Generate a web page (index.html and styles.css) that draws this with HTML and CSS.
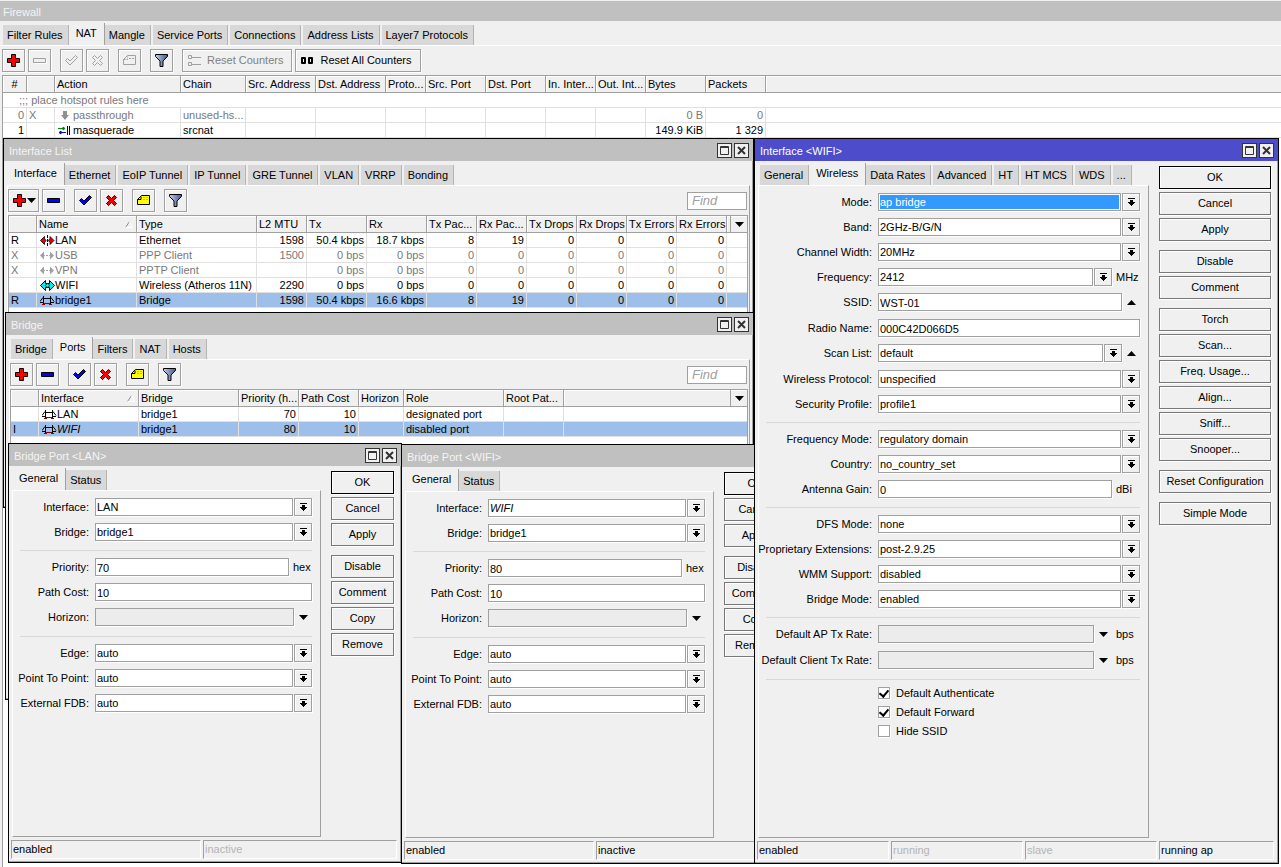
FILE: index.html
```html
<!DOCTYPE html>
<html lang="en">

<head>
    <meta charset="UTF-8">
    <meta name="viewport" content="width=device-width, initial-scale=1.0">
    <title>Firewall</title>
    <link rel="stylesheet" href="styles.css">
</head>

<body>
    <!-- Shared icons -->
    <svg class="sprite" aria-hidden="true">
        <defs>
            <linearGradient id="steel" x1="0" x2="1" y1="0" y2="0">
                <stop offset="0" stop-color="#c4cfe6" />
                <stop offset="1" stop-color="#3f5488" />
            </linearGradient>
            <symbol id="i-plus" viewBox="0 0 15 15">
                <path d="M5.5 1.5h4v4h4v4h-4v4h-4v-4h-4v-4h4z" fill="#f00" stroke="#000" />
            </symbol>
            <symbol id="i-minus" viewBox="0 0 15 15">
                <path d="M1.5 5.5h12v4h-12z" fill="#00f" stroke="#000" />
            </symbol>
            <symbol id="i-minus-off" viewBox="0 0 15 15">
                <path d="M1.5 5.5h12v4h-12z" fill="#f0f0f0" stroke="#a0a0a0" />
                <path d="M2 10.5h12.5v-4" fill="none" stroke="#fff" />
            </symbol>
            <symbol id="i-check" viewBox="0 0 15 15">
                <path d="M1.5 7.5l2-2 2.5 2.5 5.5-5.5 2 2-7.5 7.5z" fill="#00f" stroke="#000" />
            </symbol>
            <symbol id="i-check-off" viewBox="0 0 15 15">
                <path d="M1.5 7.5l2-2 2.5 2.5 5.5-5.5 2 2-7.5 7.5z" fill="#f0f0f0" stroke="#a0a0a0" />
            </symbol>
            <symbol id="i-cross" viewBox="0 0 15 15">
                <path d="M2.5 4.5l2-2 3 3 3-3 2 2-3 3 3 3-2 2-3-3-3 3-2-2 3-3z" fill="#f00" stroke="#000" />
            </symbol>
            <symbol id="i-cross-off" viewBox="0 0 15 15">
                <path d="M2.5 4.5l2-2 3 3 3-3 2 2-3 3 3 3-2 2-3-3-3 3-2-2 3-3z" fill="#f0f0f0" stroke="#a0a0a0" />
            </symbol>
            <symbol id="i-note" viewBox="0 0 15 15">
                <path d="M1.5 6.5l4-4h8v9h-12z" fill="#ff0" stroke="#000" />
                <path d="M1.5 6.5h3.5v-3" fill="none" stroke="#000" />
                <path d="M7 4.5h5M7 6.5h5" stroke="#b8b088" stroke-dasharray="2 1" />
            </symbol>
            <symbol id="i-note-off" viewBox="0 0 15 15">
                <path d="M1.5 6.5l4-4h8v9h-12z" fill="#f0f0f0" stroke="#a0a0a0" />
                <path d="M1.5 6.5h4v-3M7 5.5h5" fill="none" stroke="#a0a0a0" stroke-dasharray="2 1" />
            </symbol>
            <symbol id="i-filter" viewBox="0 0 15 15">
                <path d="M1.5 1.5h12v2l-4.5 4.5v5.5h-3v-5.5l-4.5-4.5z" fill="url(#steel)" stroke="#000" />
            </symbol>
            <symbol id="i-list" viewBox="0 0 15 15">
                <path d="M1.5 2.5h3v3h-3zM1.5 9.5h3v3h-3zM5 4.5h9M5 11.5h9" fill="none" stroke="#a0a0a0" />
            </symbol>
            <symbol id="i-zeros" viewBox="0 0 15 15">
                <path d="M2 5h3v5h-3zM9 5h3v5h-3z" fill="none" stroke="#000" stroke-width="2" stroke-linejoin="round" />
            </symbol>
            <symbol id="i-drop" viewBox="0 0 9 9">
                <path d="M1 0h7v1h-7zM3 2h3v2h2v1h-1v1h-1v1h-1v1h-1v-1h-1v-1h-1v-1h-1v-1h2z" />
            </symbol>
            <symbol id="i-down" viewBox="0 0 9 5">
                <path d="M0 0h9l-4.5 5z" />
            </symbol>
            <symbol id="i-up" viewBox="0 0 9 5">
                <path d="M0 5h9l-4.5-5z" />
            </symbol>
            <symbol id="i-max" viewBox="0 0 15 15">
                <path d="M3.5 3.5h8v8h-8zM3 4.5h9" fill="none" stroke="#333" />
            </symbol>
            <symbol id="i-close" viewBox="0 0 15 15">
                <path d="M4 4l7 7M11 4l-7 7" stroke="#333" stroke-width="2" />
            </symbol>
            <symbol id="i-eth" viewBox="0 0 15 11">
                <path d="M.5 5.5l4-4v2l1.5 2-1.5 2v2zM14 5.5l-4-4v2l-1.5 2 1.5 2v2z" fill="#e00" stroke="#000" stroke-width=".8" />
                <path d="M7.5 0v11" stroke="#000" stroke-dasharray="3 1" />
            </symbol>
            <symbol id="i-ppp" viewBox="0 0 15 11">
                <path d="M0 5.5l4-4v3l1 1-1 1v3zM14 5.5l-4-4v3l-1 1 1 1v3z" fill="#a0a0a0" />
                <path d="M6 5.5h2" stroke="#a0a0a0" />
            </symbol>
            <symbol id="i-wifi" viewBox="0 0 15 11">
                <path d="M.5 5.5l5-5v3h4v-3l5 5-5 5v-3h-4v3z" fill="#0ee" stroke="#000" />
                <path d="M7.5 3l2 2.5-2 2.5-2-2.5z" fill="#0ee" stroke="#000" stroke-width=".7" />
            </symbol>
            <symbol id="i-bridge" viewBox="0 0 15 11">
                <path d="M3.5 1v8M10.5 1v8M3 3.5h8M0 6.5l3-4M14 6.5l-3-4" fill="none" stroke="#000" />
                <path d="M0 7.5h3M11 7.5h3" fill="none" stroke="#000" />
                <path d="M2 9.5h3M9 9.5h3M4 8.5h6" fill="none" stroke="#800" />
            </symbol>
            <symbol id="i-pass" viewBox="0 0 15 11">
                <path d="M5 1h4v4h2l-4 5-4-5h2z" fill="#909090" />
            </symbol>
            <symbol id="i-masq" viewBox="0 0 15 11">
                <path d="M0 3.5h6M5 2v3l2-1.5z" fill="#080" stroke="#080" />
                <path d="M2 7.5h6M3 6v3l-2-1.5z" fill="#00f" stroke="#00f" />
                <path d="M9.5 1v9M11.5 1v9" stroke="#000" />
            </symbol>
            <symbol id="i-sort" viewBox="0 0 9 7">
                <path d="M.5 6.5l4-6" stroke="#909090" fill="none" />
                <path d="M4.5.5l3 6h-7" stroke="#fff" fill="none" />
            </symbol>
        </defs>
    </svg>

    <main class="desktop">
        <h1 class="titlebar main-title">Firewall</h1>
        <nav class="tabs">
            <a href="#" class="tab">Filter Rules</a>
            <a href="#" class="tab active">NAT</a>
            <a href="#" class="tab">Mangle</a>
            <a href="#" class="tab">Service Ports</a>
            <a href="#" class="tab">Connections</a>
            <a href="#" class="tab">Address Lists</a>
            <a href="#" class="tab">Layer7 Protocols</a>
        </nav>
        <section class="main-panel">
            <div class="toolbar">
                <div class="group">
                    <button class="tool" aria-label="Add"><svg><use href="#i-plus" /></svg></button>
                    <button class="tool" aria-label="Remove" disabled><svg><use href="#i-minus-off" /></svg></button>
                </div>
                <div class="group">
                    <button class="tool" aria-label="Enable" disabled><svg><use href="#i-check-off" /></svg></button>
                    <button class="tool" aria-label="Disable" disabled><svg><use href="#i-cross-off" /></svg></button>
                </div>
                <button class="tool" aria-label="Comment" disabled><svg><use href="#i-note-off" /></svg></button>
                <button class="tool" aria-label="Filter"><svg><use href="#i-filter" /></svg></button>
                <div class="group">
                    <button class="tool wide" disabled><svg><use href="#i-list" /></svg>Reset Counters</button>
                    <button class="tool wide"><svg><use href="#i-zeros" /></svg>Reset All Counters</button>
                </div>
            </div>
            <div class="table-box">
                <table>
                    <colgroup>
                        <col class="c-24"><col class="c-28"><col class="c-126"><col class="c-65"><col class="c-70"><col class="c-70"><col class="c-40"><col class="c-60"><col class="c-60"><col class="c-50"><col class="c-50"><col class="c-60"><col class="c-60"><col>
                    </colgroup>
                    <thead>
                        <tr>
                            <th class="center">#</th><th></th><th>Action</th><th>Chain</th><th>Src. Address</th><th>Dst. Address</th><th>Proto...</th><th>Src. Port</th><th>Dst. Port</th><th>In. Inter...</th><th>Out. Int...</th><th>Bytes</th><th>Packets</th><th></th>
                        </tr>
                    </thead>
                    <tbody>
                        <tr class="comment off">
                            <td colspan="14">;;; place hotspot rules here</td>
                        </tr>
                        <tr class="off">
                            <td class="num">0</td><td>X</td><td><svg class="mark"><use href="#i-pass" /></svg>passthrough</td><td>unused-hs...</td><td></td><td></td><td></td><td></td><td></td><td></td><td></td><td class="num">0 B</td><td class="num">0</td><td></td>
                        </tr>
                        <tr>
                            <td class="num">1</td><td></td><td><svg class="mark"><use href="#i-masq" /></svg>masquerade</td><td>srcnat</td><td></td><td></td><td></td><td></td><td></td><td></td><td></td><td class="num">149.9 KiB</td><td class="num">1 329</td><td></td>
                        </tr>
                    </tbody>
                </table>
            </div>
        </section>

        <!-- Interface List -->
        <section class="window interface-list">
            <header class="titlebar">
                <h2>Interface List</h2>
                <button class="ctl" aria-label="Maximize"><svg><use href="#i-max" /></svg></button>
                <button class="ctl" aria-label="Close"><svg><use href="#i-close" /></svg></button>
            </header>
            <nav class="tabs">
                <a href="#" class="tab active">Interface</a>
                <a href="#" class="tab">Ethernet</a>
                <a href="#" class="tab">EoIP Tunnel</a>
                <a href="#" class="tab">IP Tunnel</a>
                <a href="#" class="tab">GRE Tunnel</a>
                <a href="#" class="tab">VLAN</a>
                <a href="#" class="tab">VRRP</a>
                <a href="#" class="tab">Bonding</a>
            </nav>
            <div class="panel">
                <div class="toolbar">
                    <div class="group">
                        <button class="tool menu" aria-label="Add"><svg><use href="#i-plus" /></svg><svg class="arrow"><use href="#i-down" /></svg></button>
                        <button class="tool" aria-label="Remove"><svg><use href="#i-minus" /></svg></button>
                    </div>
                    <div class="group">
                        <button class="tool" aria-label="Enable"><svg><use href="#i-check" /></svg></button>
                        <button class="tool" aria-label="Disable"><svg><use href="#i-cross" /></svg></button>
                    </div>
                    <button class="tool" aria-label="Comment"><svg><use href="#i-note" /></svg></button>
                    <button class="tool" aria-label="Filter"><svg><use href="#i-filter" /></svg></button>
                    <input class="find" type="text" placeholder="Find" aria-label="Find interface">
                </div>
                <div class="table-box">
                    <table>
                        <colgroup>
                            <col class="c-28"><col class="c-100"><col class="c-120"><col class="c-50"><col class="c-60"><col class="c-60"><col class="c-50"><col class="c-50"><col class="c-50"><col class="c-50"><col class="c-50"><col class="c-50"><col>
                        </colgroup>
                        <thead>
                            <tr>
                                <th></th><th>Name<svg class="sort"><use href="#i-sort" /></svg></th><th>Type</th><th>L2 MTU</th><th>Tx</th><th>Rx</th><th>Tx Pac...</th><th>Rx Pac...</th><th>Tx Drops</th><th>Rx Drops</th><th>Tx Errors</th><th>Rx Errors</th><th class="pick"><button aria-label="Columns"><svg class="arrow"><use href="#i-down" /></svg></button></th>
                            </tr>
                        </thead>
                        <tbody>
                            <tr>
                                <td>R</td><td><svg class="mark"><use href="#i-eth" /></svg>LAN</td><td>Ethernet</td><td class="num">1598</td><td class="num">50.4 kbps</td><td class="num">18.7 kbps</td><td class="num">8</td><td class="num">19</td><td class="num">0</td><td class="num">0</td><td class="num">0</td><td class="num">0</td><td></td>
                            </tr>
                            <tr class="off">
                                <td>X</td><td><svg class="mark"><use href="#i-ppp" /></svg>USB</td><td>PPP Client</td><td class="num">1500</td><td class="num">0 bps</td><td class="num">0 bps</td><td class="num">0</td><td class="num">0</td><td class="num">0</td><td class="num">0</td><td class="num">0</td><td class="num">0</td><td></td>
                            </tr>
                            <tr class="off">
                                <td>X</td><td><svg class="mark"><use href="#i-ppp" /></svg>VPN</td><td>PPTP Client</td><td></td><td class="num">0 bps</td><td class="num">0 bps</td><td class="num">0</td><td class="num">0</td><td class="num">0</td><td class="num">0</td><td class="num">0</td><td class="num">0</td><td></td>
                            </tr>
                            <tr>
                                <td></td><td><svg class="mark"><use href="#i-wifi" /></svg>WIFI</td><td>Wireless (Atheros 11N)</td><td class="num">2290</td><td class="num">0 bps</td><td class="num">0 bps</td><td class="num">0</td><td class="num">0</td><td class="num">0</td><td class="num">0</td><td class="num">0</td><td class="num">0</td><td></td>
                            </tr>
                            <tr class="selected">
                                <td>R</td><td><svg class="mark"><use href="#i-bridge" /></svg>bridge1</td><td>Bridge</td><td class="num">1598</td><td class="num">50.4 kbps</td><td class="num">16.6 kbps</td><td class="num">8</td><td class="num">19</td><td class="num">0</td><td class="num">0</td><td class="num">0</td><td class="num">0</td><td></td>
                            </tr>
                        </tbody>
                    </table>
                </div>
            </div>
        </section>

        <!-- Bridge -->
        <section class="window bridge-list">
            <header class="titlebar">
                <h2>Bridge</h2>
                <button class="ctl" aria-label="Maximize"><svg><use href="#i-max" /></svg></button>
                <button class="ctl" aria-label="Close"><svg><use href="#i-close" /></svg></button>
            </header>
            <nav class="tabs">
                <a href="#" class="tab">Bridge</a>
                <a href="#" class="tab active">Ports</a>
                <a href="#" class="tab">Filters</a>
                <a href="#" class="tab">NAT</a>
                <a href="#" class="tab">Hosts</a>
            </nav>
            <div class="panel">
                <div class="toolbar">
                    <div class="group">
                        <button class="tool" aria-label="Add"><svg><use href="#i-plus" /></svg></button>
                        <button class="tool" aria-label="Remove"><svg><use href="#i-minus" /></svg></button>
                    </div>
                    <div class="group">
                        <button class="tool" aria-label="Enable"><svg><use href="#i-check" /></svg></button>
                        <button class="tool" aria-label="Disable"><svg><use href="#i-cross" /></svg></button>
                    </div>
                    <button class="tool" aria-label="Comment"><svg><use href="#i-note" /></svg></button>
                    <button class="tool" aria-label="Filter"><svg><use href="#i-filter" /></svg></button>
                    <input class="find" type="text" placeholder="Find" aria-label="Find port">
                </div>
                <div class="table-box">
                    <table>
                        <colgroup>
                            <col class="c-28"><col class="c-100"><col class="c-100"><col class="c-60"><col class="c-60"><col class="c-45"><col class="c-100"><col class="c-60"><col>
                        </colgroup>
                        <thead>
                            <tr>
                                <th></th><th>Interface<svg class="sort"><use href="#i-sort" /></svg></th><th>Bridge</th><th>Priority (h...</th><th>Path Cost</th><th>Horizon</th><th>Role</th><th>Root Pat...</th><th class="pick"><button aria-label="Columns"><svg class="arrow"><use href="#i-down" /></svg></button></th>
                            </tr>
                        </thead>
                        <tbody>
                            <tr>
                                <td></td><td><svg class="mark"><use href="#i-bridge" /></svg>LAN</td><td>bridge1</td><td class="num">70</td><td class="num">10</td><td></td><td>designated port</td><td></td><td></td>
                            </tr>
                            <tr class="selected">
                                <td>I</td><td><svg class="mark"><use href="#i-bridge" /></svg><i>WIFI</i></td><td>bridge1</td><td class="num">80</td><td class="num">10</td><td></td><td>disabled port</td><td></td><td></td>
                            </tr>
                        </tbody>
                    </table>
                </div>
            </div>
        </section>

        <!-- Bridge Port <WIFI> -->
        <section class="window port port-wifi">
            <header class="titlebar">
                <h2>Bridge Port &lt;WIFI&gt;</h2>
                <button class="ctl" aria-label="Maximize"><svg><use href="#i-max" /></svg></button>
                <button class="ctl" aria-label="Close"><svg><use href="#i-close" /></svg></button>
            </header>
            <div class="dialog">
                <div class="pages">
                    <nav class="tabs">
                        <a href="#" class="tab active">General</a>
                        <a href="#" class="tab">Status</a>
                    </nav>
                    <form class="panel form">
                        <div class="row"><label for="w-if">Interface:</label><select id="w-if" class="italic"><option>WIFI</option></select><span class="drop"><svg><use href="#i-drop" /></svg></span></div>
                        <div class="row"><label for="w-br">Bridge:</label><select id="w-br"><option>bridge1</option></select><span class="drop"><svg><use href="#i-drop" /></svg></span></div>
                        <hr>
                        <div class="row"><label for="w-pr">Priority:</label><input id="w-pr" type="text" value="80"><span class="unit">hex</span></div>
                        <div class="row"><label for="w-pc">Path Cost:</label><input id="w-pc" type="text" value="10"></div>
                        <div class="row optional"><label for="w-hz">Horizon:</label><input id="w-hz" type="text" disabled><button type="button" class="expand" aria-label="Set horizon"><svg class="arrow"><use href="#i-down" /></svg></button></div>
                        <hr>
                        <div class="row"><label for="w-ed">Edge:</label><select id="w-ed"><option>auto</option></select><span class="drop"><svg><use href="#i-drop" /></svg></span></div>
                        <div class="row"><label for="w-pp">Point To Point:</label><select id="w-pp"><option>auto</option></select><span class="drop"><svg><use href="#i-drop" /></svg></span></div>
                        <div class="row"><label for="w-fd">External FDB:</label><select id="w-fd"><option>auto</option></select><span class="drop"><svg><use href="#i-drop" /></svg></span></div>
                    </form>
                </div>
                <div class="actions">
                    <div class="stack">
                        <button class="action default">OK</button>
                        <button class="action">Cancel</button>
                        <button class="action">Apply</button>
                    </div>
                    <div class="stack">
                        <button class="action">Disable</button>
                        <button class="action">Comment</button>
                        <button class="action">Copy</button>
                        <button class="action">Remove</button>
                    </div>
                </div>
            </div>
            <footer class="status">
                <span>enabled</span>
                <span>inactive</span>
            </footer>
        </section>

        <!-- Bridge Port <LAN> -->
        <section class="window port port-lan">
            <header class="titlebar">
                <h2>Bridge Port &lt;LAN&gt;</h2>
                <button class="ctl" aria-label="Maximize"><svg><use href="#i-max" /></svg></button>
                <button class="ctl" aria-label="Close"><svg><use href="#i-close" /></svg></button>
            </header>
            <div class="dialog">
                <div class="pages">
                    <nav class="tabs">
                        <a href="#" class="tab active">General</a>
                        <a href="#" class="tab">Status</a>
                    </nav>
                    <form class="panel form">
                        <div class="row"><label for="l-if">Interface:</label><select id="l-if"><option>LAN</option></select><span class="drop"><svg><use href="#i-drop" /></svg></span></div>
                        <div class="row"><label for="l-br">Bridge:</label><select id="l-br"><option>bridge1</option></select><span class="drop"><svg><use href="#i-drop" /></svg></span></div>
                        <hr>
                        <div class="row"><label for="l-pr">Priority:</label><input id="l-pr" type="text" value="70"><span class="unit">hex</span></div>
                        <div class="row"><label for="l-pc">Path Cost:</label><input id="l-pc" type="text" value="10"></div>
                        <div class="row optional"><label for="l-hz">Horizon:</label><input id="l-hz" type="text" disabled><button type="button" class="expand" aria-label="Set horizon"><svg class="arrow"><use href="#i-down" /></svg></button></div>
                        <hr>
                        <div class="row"><label for="l-ed">Edge:</label><select id="l-ed"><option>auto</option></select><span class="drop"><svg><use href="#i-drop" /></svg></span></div>
                        <div class="row"><label for="l-pp">Point To Point:</label><select id="l-pp"><option>auto</option></select><span class="drop"><svg><use href="#i-drop" /></svg></span></div>
                        <div class="row"><label for="l-fd">External FDB:</label><select id="l-fd"><option>auto</option></select><span class="drop"><svg><use href="#i-drop" /></svg></span></div>
                    </form>
                </div>
                <div class="actions">
                    <div class="stack">
                        <button class="action default">OK</button>
                        <button class="action">Cancel</button>
                        <button class="action">Apply</button>
                    </div>
                    <div class="stack">
                        <button class="action">Disable</button>
                        <button class="action">Comment</button>
                        <button class="action">Copy</button>
                        <button class="action">Remove</button>
                    </div>
                </div>
            </div>
            <footer class="status">
                <span>enabled</span>
                <span class="faded">inactive</span>
            </footer>
        </section>

        <!-- Interface <WIFI> -->
        <section class="window focused wifi">
            <header class="titlebar">
                <h2>Interface &lt;WIFI&gt;</h2>
                <button class="ctl" aria-label="Maximize"><svg><use href="#i-max" /></svg></button>
                <button class="ctl" aria-label="Close"><svg><use href="#i-close" /></svg></button>
            </header>
            <div class="dialog">
                <div class="pages">
                    <nav class="tabs">
                        <a href="#" class="tab">General</a>
                        <a href="#" class="tab active">Wireless</a>
                        <a href="#" class="tab">Data Rates</a>
                        <a href="#" class="tab">Advanced</a>
                        <a href="#" class="tab">HT</a>
                        <a href="#" class="tab">HT MCS</a>
                        <a href="#" class="tab">WDS</a>
                        <a href="#" class="tab">...</a>
                    </nav>
                    <form class="panel form">
                        <div class="row"><label for="mode">Mode:</label><select id="mode" class="picked"><option>ap bridge</option></select><span class="drop"><svg><use href="#i-drop" /></svg></span></div>
                        <div class="row"><label for="band">Band:</label><select id="band"><option>2GHz-B/G/N</option></select><span class="drop"><svg><use href="#i-drop" /></svg></span></div>
                        <div class="row"><label for="chan">Channel Width:</label><select id="chan"><option>20MHz</option></select><span class="drop"><svg><use href="#i-drop" /></svg></span></div>
                        <div class="row"><label for="freq">Frequency:</label><select id="freq"><option>2412</option></select><span class="drop"><svg><use href="#i-drop" /></svg></span><span class="unit">MHz</span></div>
                        <div class="row optional"><label for="ssid">SSID:</label><input id="ssid" type="text" value="WST-01"><button type="button" class="expand" aria-label="Clear SSID"><svg class="arrow"><use href="#i-up" /></svg></button></div>
                        <div class="row"><label for="radio">Radio Name:</label><input id="radio" type="text" value="000C42D066D5"></div>
                        <div class="row optional"><label for="scan">Scan List:</label><select id="scan"><option>default</option></select><span class="drop"><svg><use href="#i-drop" /></svg></span><button type="button" class="expand" aria-label="Clear scan list"><svg class="arrow"><use href="#i-up" /></svg></button></div>
                        <div class="row"><label for="proto">Wireless Protocol:</label><select id="proto"><option>unspecified</option></select><span class="drop"><svg><use href="#i-drop" /></svg></span></div>
                        <div class="row"><label for="sec">Security Profile:</label><select id="sec"><option>profile1</option></select><span class="drop"><svg><use href="#i-drop" /></svg></span></div>
                        <hr>
                        <div class="row"><label for="fmode">Frequency Mode:</label><select id="fmode"><option>regulatory domain</option></select><span class="drop"><svg><use href="#i-drop" /></svg></span></div>
                        <div class="row"><label for="country">Country:</label><select id="country"><option>no_country_set</option></select><span class="drop"><svg><use href="#i-drop" /></svg></span></div>
                        <div class="row"><label for="gain">Antenna Gain:</label><input id="gain" type="text" value="0"><span class="unit">dBi</span></div>
                        <hr>
                        <div class="row"><label for="dfs">DFS Mode:</label><select id="dfs"><option>none</option></select><span class="drop"><svg><use href="#i-drop" /></svg></span></div>
                        <div class="row"><label for="ext">Proprietary Extensions:</label><select id="ext"><option>post-2.9.25</option></select><span class="drop"><svg><use href="#i-drop" /></svg></span></div>
                        <div class="row"><label for="wmm">WMM Support:</label><select id="wmm"><option>disabled</option></select><span class="drop"><svg><use href="#i-drop" /></svg></span></div>
                        <div class="row"><label for="bmode">Bridge Mode:</label><select id="bmode"><option>enabled</option></select><span class="drop"><svg><use href="#i-drop" /></svg></span></div>
                        <hr>
                        <div class="row optional"><label for="aprate">Default AP Tx Rate:</label><input id="aprate" type="text" disabled><button type="button" class="expand" aria-label="Set AP rate"><svg class="arrow"><use href="#i-down" /></svg></button><span class="unit">bps</span></div>
                        <div class="row optional"><label for="clrate">Default Client Tx Rate:</label><input id="clrate" type="text" disabled><button type="button" class="expand" aria-label="Set client rate"><svg class="arrow"><use href="#i-down" /></svg></button><span class="unit">bps</span></div>
                        <hr>
                        <div class="tick"><input type="checkbox" id="auth" checked><label for="auth">Default Authenticate</label></div>
                        <div class="tick"><input type="checkbox" id="fwd" checked><label for="fwd">Default Forward</label></div>
                        <div class="tick"><input type="checkbox" id="hide"><label for="hide">Hide SSID</label></div>
                    </form>
                </div>
                <div class="actions">
                    <div class="stack">
                        <button class="action default">OK</button>
                        <button class="action">Cancel</button>
                        <button class="action">Apply</button>
                    </div>
                    <div class="stack">
                        <button class="action">Disable</button>
                        <button class="action">Comment</button>
                    </div>
                    <div class="stack">
                        <button class="action">Torch</button>
                        <button class="action">Scan...</button>
                        <button class="action">Freq. Usage...</button>
                        <button class="action">Align...</button>
                        <button class="action">Sniff...</button>
                        <button class="action">Snooper...</button>
                    </div>
                    <button class="action">Reset Configuration</button>
                    <button class="action">Simple Mode</button>
                </div>
            </div>
            <footer class="status">
                <span>enabled</span>
                <span class="faded">running</span>
                <span class="faded">slave</span>
                <span>running ap</span>
            </footer>
        </section>
    </main>
</body>

</html>
```
FILE: styles.css
```css
* {
    box-sizing: border-box;
}

body {
    margin: 0;
    background: #f0f0f0;
    color: #000;
}

body,
button,
input,
select {
    font-family: "Liberation Sans", Arial, sans-serif;
    font-size: 11px;
    line-height: 15px;
}

button,
input,
select {
    margin: 0;
    padding: 0;
    border-radius: 0;
    color: #000;
}

.sprite {
    position: absolute;
    width: 0;
    height: 0;
}

svg {
    flex: none;
    width: 15px;
    height: 15px;
}

.arrow {
    width: 9px;
    height: 5px;
}

.desktop {
    position: relative;
    display: flex;
    flex-direction: column;
    min-height: 100vh;
    overflow: hidden;
}

/* Title bars */
.titlebar {
    display: flex;
    align-items: center;
    gap: 2px;
    height: 22px;
    margin: 0;
    padding: 0 4px 0 5px;
    background: #c0c0c0;
    color: #f4f4f4;
    font-weight: normal;
    font-size: 11px;
}

.titlebar h2 {
    flex: 1;
    margin: 0;
    padding-top: 3px;
    font-size: 11px;
    font-weight: normal;
}

.main-title {
    height: 21px;
    padding: 2px 3px 0;
    border-top: 1px solid #f0f0f0;
}

.focused .titlebar {
    background: #4d4dcc;
    color: #fff;
}

.ctl {
    width: 15px;
    height: 15px;
    border: 1px solid #333;
    background: #f0f0f0;
}

.ctl svg {
    display: block;
    margin: -1px;
}

/* Tabs */
.tabs {
    display: flex;
    align-items: flex-end;
    height: 24px;
    padding: 2px 0 0;
}

.tab {
    height: 20px;
    margin-left: 2px;
    padding: 3px 5px 0 4px;
    border-right: 1px solid #b4b4b4;
    background: #d8d8d8;
    color: #000;
    text-decoration: none;
    white-space: nowrap;
}

.tab.active {
    height: 22px;
    margin-left: 0;
    padding: 3px 7px 0;
    border-right-color: #a0a0a0;
    background: #f0f0f0;
}

.tab.active + .tab {
    margin-left: 0;
}

.desktop > .tabs {
    padding-left: 1px;
}

.main-panel {
    display: flex;
    flex: 1;
    flex-direction: column;
    padding-left: 2px;
    border-top: 1px solid #fff;
}

/* Toolbar */
.toolbar {
    display: flex;
    align-items: center;
    gap: 9px;
    padding: 3px 0;
}

.group {
    display: flex;
    gap: 3px;
}

.tool {
    display: flex;
    align-items: center;
    justify-content: center;
    width: 23px;
    height: 23px;
    border: 1px solid #a0a0a0;
    background: #f0f0f0;
    box-shadow: 1px 1px #fff, inset 1px 1px #fff;
}

.tool.menu {
    width: 31px;
}

.tool.wide {
    gap: 5px;
    width: auto;
    padding: 0 8px 0 4px;
}

.tool:disabled {
    color: #808080;
}

.find {
    width: 60px;
    height: 18px;
    margin: 0 2px 0 auto;
    padding: 0 4px;
    border: 1px solid #a0a0a0;
    background: #fff;
    font-style: italic;
    font-size: 13px;
}

.find::placeholder {
    color: #a0a0a0;
}

/* Tables */
.table-box {
    flex: 1;
    border-left: 1px solid #a0a0a0;
    background: #fff;
}

table {
    width: 100%;
    border-collapse: separate;
    border-spacing: 0;
    table-layout: fixed;
}

th,
td {
    overflow: hidden;
    padding: 0 2px;
    text-align: left;
    font-weight: normal;
    white-space: nowrap;
}

th {
    height: 18px;
    border: solid #a0a0a0;
    border-width: 1px 1px 1px 0;
    background: #f0f0f0;
    box-shadow: inset 1px 1px #fff;
}

td {
    height: 15px;
    border-right: 1px solid #e0e0e0;
    border-bottom: 1px solid #e0e0e0;
    line-height: 14px;
}

th:last-child,
td:last-child {
    border-right: 0;
}

.center {
    text-align: center;
}

.num {
    text-align: right;
}

.comment td {
    padding-left: 16px;
}

.off {
    color: #787878;
}

.selected {
    background: #9dbfea;
}

.mark {
    width: 15px;
    height: 11px;
    margin-left: 1px;
    vertical-align: -2px;
}

.sort {
    float: right;
    width: 9px;
    height: 7px;
    margin-top: 4px;
}

.pick {
    padding: 0;
    text-align: right;
}

.pick button {
    width: 17px;
    height: 16px;
    border: 0;
    border-left: 1px solid #a0a0a0;
    background: none;
    vertical-align: top;
}

.pick .arrow {
    display: block;
    margin: 0 auto;
}

.c-24 { width: 24px; }
.c-28 { width: 28px; }
.c-40 { width: 40px; }
.c-45 { width: 45px; }
.c-50 { width: 50px; }
.c-60 { width: 60px; }
.c-65 { width: 65px; }
.c-70 { width: 70px; }
.c-100 { width: 100px; }
.c-120 { width: 120px; }
.c-126 { width: 126px; }

/* Windows on the desktop */
.window {
    position: absolute;
    display: flex;
    flex-direction: column;
    border: 1px solid #000;
    background: #f0f0f0;
    box-shadow: inset -1px -1px #a0a0a0;
}

.window > .tabs,
.window > .panel {
    margin: 0 3px;
}

.window > .panel {
    margin-bottom: 3px;
}

.interface-list {
    left: 3px;
    top: 138px;
    width: 751px;
    height: 370px;
}

.bridge-list {
    left: 5px;
    top: 312px;
    width: 749px;
    height: 388px;
}

.port {
    width: 394px;
    height: 420px;
}

.port-lan {
    left: 8px;
    top: 443px;
}

.port-wifi {
    left: 401px;
    top: 444px;
}

.wifi {
    left: 754px;
    top: 138px;
    width: 525px;
    height: 726px;
}

.panel {
    display: flex;
    flex: 1;
    flex-direction: column;
    border: 1px solid #fff;
    border-right-color: #a0a0a0;
    border-bottom-color: #a0a0a0;
}

.panel .table-box {
    margin-right: 1px;
    border-right: 1px solid #a0a0a0;
}

.dialog {
    display: flex;
    flex: 1;
    gap: 10px;
    padding: 0 7px 3px 3px;
}

.pages {
    display: flex;
    flex: 1;
    flex-direction: column;
    min-width: 0;
}

/* Forms */
.form {
    gap: 7px;
    padding: 7px 8px 7px 7px;
}

.row {
    display: flex;
    height: 18px;
}

.row.optional {
    height: 19px;
}

.row label {
    display: flex;
    flex: none;
    justify-content: flex-end;
    width: 75px;
    padding: 2px 6px 0 0;
    white-space: nowrap;
}

.wifi .row label {
    width: 112px;
}

.row input,
.row select {
    flex: 1;
    min-width: 0;
    height: 18px;
    padding: 1px 1px 0;
    border: 1px solid #a0a0a0;
    background: #fff;
    box-shadow: 1px 1px #fff;
    appearance: none;
    outline: 0;
}

.row input:disabled {
    background: #ececec;
}

.row .picked {
    background: #39f;
    box-shadow: inset 0 0 0 1px #fff, 1px 1px #fff;
    color: #fff;
}

.row .italic {
    font-style: italic;
}

.drop {
    display: flex;
    flex: none;
    align-items: center;
    justify-content: center;
    width: 18px;
    height: 18px;
    margin-left: 1px;
    border: 1px solid #a0a0a0;
    box-shadow: 1px 1px #fff, inset 1px 1px #fff;
}

.drop svg {
    width: 9px;
    height: 9px;
}

.expand {
    display: flex;
    flex: none;
    align-items: center;
    justify-content: center;
    width: 18px;
    height: 18px;
    border: 0;
    background: none;
}

.unit {
    flex: none;
    width: 19px;
    margin-left: 4px;
    padding-top: 2px;
}

.wifi .unit {
    width: 24px;
}

hr {
    width: 100%;
    height: 1px;
    margin: 2px 0 0;
    border: 0;
    background: #d8d8d8;
}

.tick {
    display: flex;
    align-items: center;
    gap: 6px;
    height: 12px;
    padding-left: 112px;
}

.tick input {
    display: grid;
    place-items: center;
    width: 12px;
    height: 12px;
    border: 1px solid #a0a0a0;
    background: #fff;
    box-shadow: 1px 1px #fff;
    appearance: none;
}

.tick input:checked::before {
    content: "";
    width: 4px;
    height: 7px;
    margin-top: -2px;
    border: solid #000;
    border-width: 0 2px 2px 0;
    transform: rotate(40deg);
}

.tick label {
    padding-top: 1px;
}

/* Side buttons */
.actions {
    display: flex;
    flex: none;
    flex-direction: column;
    gap: 9px;
    width: 63px;
    padding-top: 5px;
}

.wifi .actions {
    width: 112px;
}

.stack {
    display: flex;
    flex-direction: column;
    gap: 3px;
}

.action {
    height: 23px;
    border: 1px solid #787878;
    background: #f0f0f0;
    box-shadow: 1px 1px #fff, inset 1px 1px #fff;
    white-space: nowrap;
}

.action.default {
    border-color: #000;
}

/* Status bar */
.status {
    display: grid;
    grid-template-columns: 190px 1fr;
    gap: 2px;
    margin: 0 4px 3px 2px;
}

.wifi .status {
    grid-template-columns: 1fr 1fr 1fr 115px;
}

.status span {
    height: 19px;
    padding: 1px 1px 0;
    border: 1px solid #a0a0a0;
    border-right-color: #fff;
    border-bottom-color: #fff;
}

.status .faded {
    color: #b4b4b4;
}
```
